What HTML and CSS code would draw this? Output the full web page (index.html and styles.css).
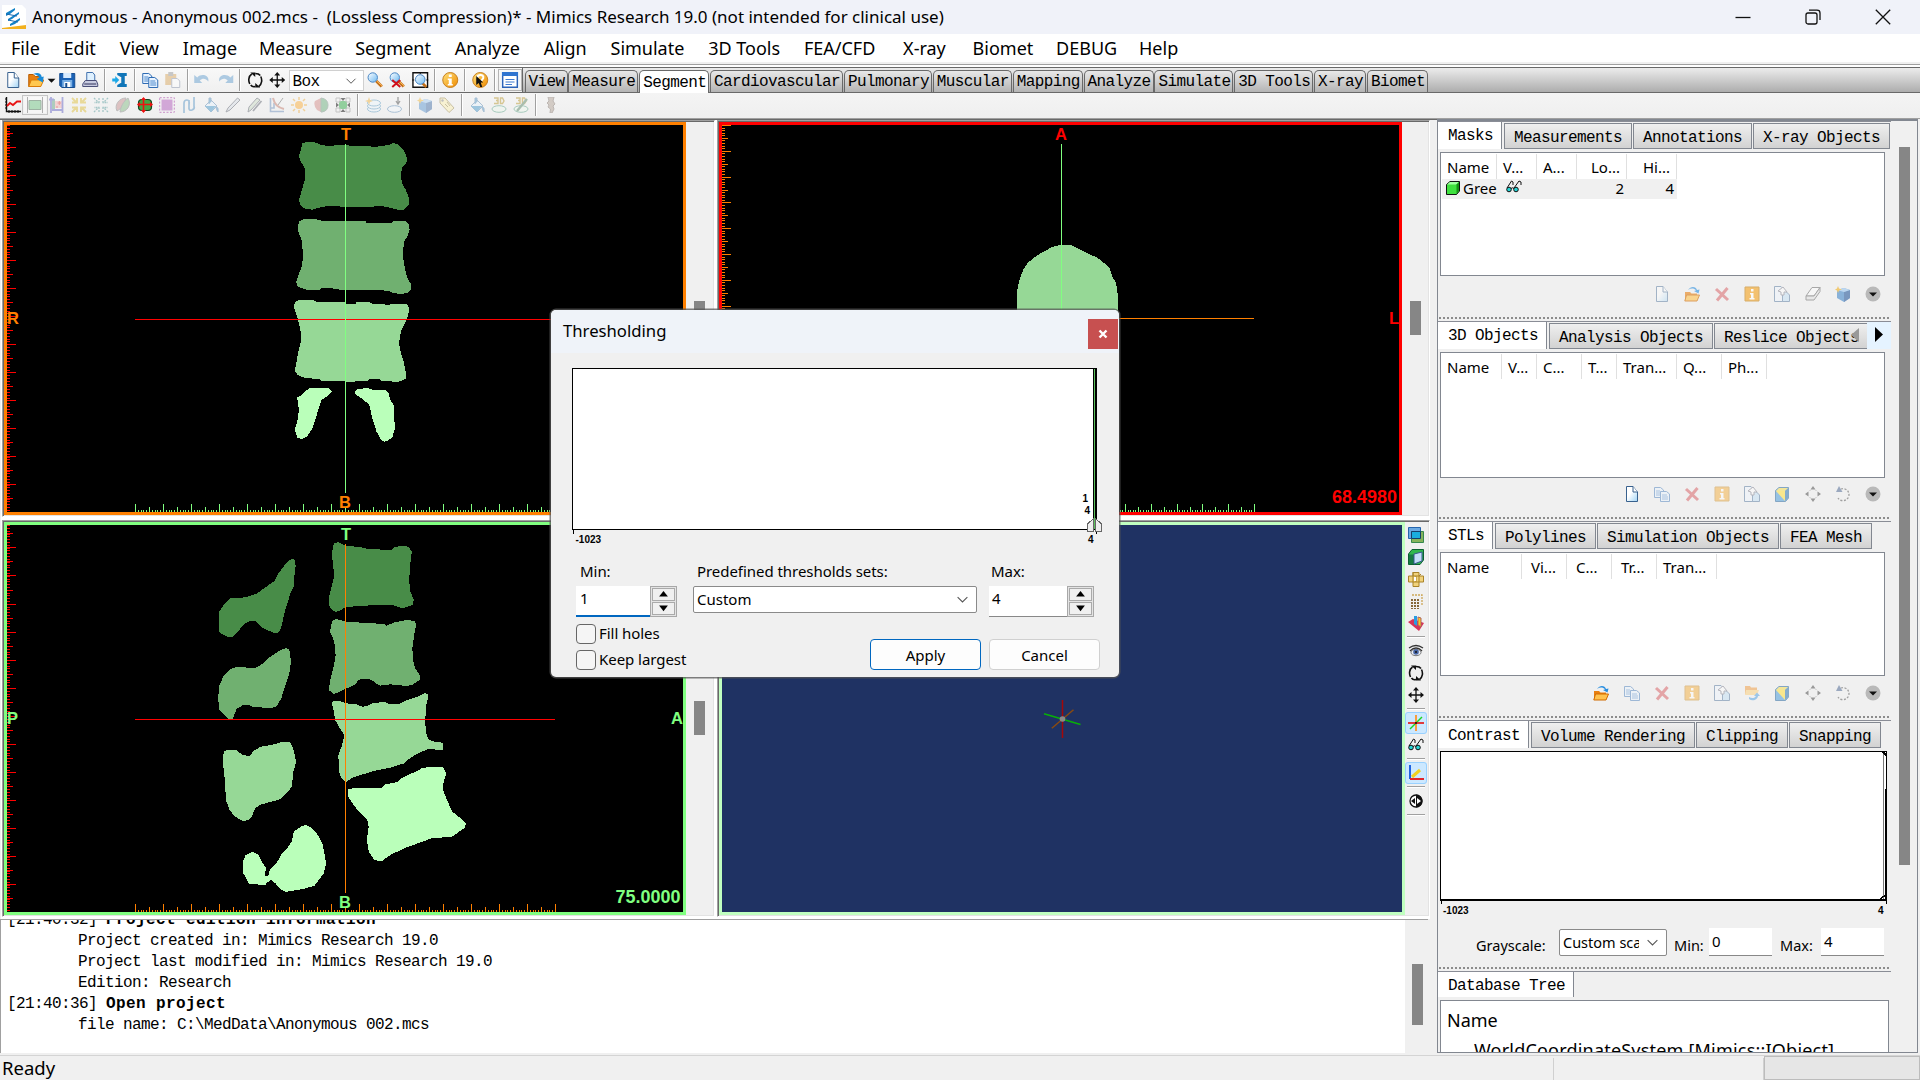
FILE: index.html
```html
<!DOCTYPE html>
<html lang="en">
<head>
<meta charset="utf-8">
<title>Mimics Research 19.0</title>
<link rel="stylesheet" href="styles.css">
</head>
<body>
<svg class="sprite" width="0" height="0">
  <defs>
    <linearGradient id="g-page" x1="0" y1="0" x2="1" y2="1"><stop offset=".4" stop-color="#fff"/><stop offset="1" stop-color="#9fd3f5"/></linearGradient>
    <linearGradient id="g-gold" x1="0" y1="0" x2="1" y2="1"><stop offset="0" stop-color="#ffe27a"/><stop offset="1" stop-color="#ef8a00"/></linearGradient>
    <linearGradient id="g-lens" x1="0" y1="0" x2="1" y2="1"><stop offset="0" stop-color="#fff"/><stop offset="1" stop-color="#6db9f2"/></linearGradient>
    <pattern id="dots-brown" width="3" height="3" patternUnits="userSpaceOnUse"><rect width="2" height="2" fill="#86683a"/></pattern>
  </defs>
  <symbol id="new" viewBox="0 0 16 16"><path d="M2.500.5H9L13.500 6V15.500H2.500Z" fill="url(#g-page)" stroke="#38618e"/><path d="M9 .5V6H13.500" fill="#fff" stroke="#38618e"/></symbol>
  <symbol id="open" viewBox="0 0 16 16"><path d="M.5 2.500H5L7 4.500H12V14.500H.5Z" fill="#e98010" stroke="#b85c00"/><path d="M3 8H15.500L12.500 14.500H.5Z" fill="#ffc850" stroke="#d97c08"/><path d="M5 2C9 0 13 1 13.500 5L15.500 4.500 14.500 10.500 8.500 7 11 5.500C10 3.500 8 2.500 5 2Z" fill="#1a8bd8"/></symbol>
  <symbol id="folder" viewBox="0 0 16 16"><path d="M1 6H6L7.500 7.500H13V15H1Z" fill="#e98010"/><path d="M2.500 9H15.500L13 15H.8Z" fill="#ffc24e" stroke="#d06a00"/><path d="M4 4C7-.5 12 .5 13 4L15.500 3.500 14.500 7.500 10 5 12 4.500C10 2 7 2 4 4Z" fill="#2a8fe0"/></symbol>
  <symbol id="caret" viewBox="0 0 16 16"><path d="M1 5H15L8 12Z" fill="#111"/></symbol>
  <symbol id="save" viewBox="0 0 16 16"><path d="M.5 1.500H15.500V15.500H2.500L.5 13.500Z" fill="#1b62b5" stroke="#174e91"/><path d="M4 1H12V6H4Z" fill="#d8ebff"/><path d="M3 8H13V15H3Z" fill="#7ab0e6"/><path d="M5 10H11V15H5Z" fill="#fff"/><path d="M6 11H8V15H6Z" fill="#174e91"/></symbol>
  <symbol id="print" viewBox="0 0 16 16"><path d="M4.500.5H10.500L12.500 3V9H4.500Z" fill="#dff1ff" stroke="#4272ae"/><path d="M.5 12L3 8.500H14L15.500 12V14.500H.5Z" fill="#c8cbe0" stroke="#4c5078"/><path d="M2 12H14" stroke="#30335a"/></symbol>
  <symbol id="mimics" viewBox="0 0 16 16"><path d="M5 1H14.500V4H12.500V12H14.500V15H5V13L8.500 11H9V5H8.500L5 3Z" fill="#1176b8"/><path d="M0 6.500H3V4L7 8 3 12V9.500H0Z" fill="#1ba8e8"/></symbol>
  <symbol id="copy" viewBox="0 0 16 16"><path d="M.5 1.500H6.500L9.500 4V11.500H.5Z" fill="#e8f3ff" stroke="#2f6cb4"/><path d="M6.500 5.500H12.500L15.500 8V15.500H6.500Z" fill="#e8f3ff" stroke="#2f6cb4"/><path d="M2 5H6M2 7H6M2 9H6M8 9H13M8 11H14M8 13H14" stroke="#4b88cc"/></symbol>
  <symbol id="paste" viewBox="0 0 16 16"><path d="M1 2H12V13H1Z" fill="#d49a45"/><path d="M4 0H9V4H4Z" fill="#888"/><path d="M7.500 6.500H13L15.500 9V15.500H7.500Z" fill="#fff" stroke="#7a86a0"/></symbol>
  <symbol id="undo" viewBox="0 0 16 16"><path d="M0 3V11H8L5.500 8.500C8 6 11.500 6 14 9.500 15.500 3 7 1 3 5.500Z" fill="#4b90c8"/></symbol>
  <symbol id="redo" viewBox="0 0 16 16"><path d="M16 3V11H8L10.500 8.500C8 6 4.500 6 2 9.500 .5 3 9 1 13 5.500Z" fill="#4b90c8"/></symbol>
  <symbol id="rotate" viewBox="0 0 16 16"><path d="M4.500 2C1 4.500 1 9 2.500 12M11.500 14.500C15 12 15 7.500 13.500 4.500M8 1.500C11 1.500 12 2 13 3.500M3.500 13C4.500 14.500 6 15 8 14.500" fill="none" stroke="#111" stroke-width="1.600"/><path d="M3 .5H8V5ZM13 15.500H8V11Z" fill="#111"/></symbol>
  <symbol id="move" viewBox="0 0 16 16"><path d="M8 2V14M2 8H14" stroke="#111" stroke-width="1.300"/><path d="M8 0L11 3.500H5ZM8 16L11 12.500H5ZM0 8L3.500 5V11ZM16 8L12.500 5V11Z" fill="#111"/></symbol>
  <symbol id="zoom" viewBox="0 0 16 16"><path d="M9 9L14.500 14.500" stroke="#c2701a" stroke-width="3"/><path d="M9.500 9L15 14" stroke="#ffb95a"/><circle cx="5.500" cy="5.500" r="4.700" fill="url(#g-lens)" stroke="#4a86c4"/></symbol>
  <symbol id="unzoom" viewBox="0 0 16 16"><use href="#zoom"/><path d="M3 8L11 15M11 8L3 15" stroke="#d1101c" stroke-width="2"/></symbol>
  <symbol id="zoomfit" viewBox="0 0 16 16"><path d="M.7.7H15.300V15.300H.7Z" fill="#fff" stroke="#111" stroke-width="1.400"/><path d="M10 11L14 15" stroke="#c2701a" stroke-width="2.500"/><circle cx="8" cy="7.500" r="4.800" fill="url(#g-lens)" stroke="#4a86c4"/><path d="M2 8H0M16 8H14M8 0V2" stroke="#111"/></symbol>
  <symbol id="info" viewBox="0 0 16 16"><circle cx="8" cy="8" r="7.500" fill="url(#g-gold)" stroke="#c78022"/><path d="M6.500 2.500H9.500V5H6.500ZM5.500 6.500H9.500V12H10.500V13.500H5.500V12H6.500V8H5.500Z" fill="#fff"/></symbol>
  <symbol id="help" viewBox="0 0 16 16"><circle cx="8" cy="8" r="7.500" fill="url(#g-gold)" stroke="#c78022"/><path d="M5 6C5 2 12 2 11 6L9 9" fill="none" stroke="#fff" stroke-width="2"/><path d="M4 4V13L6.500 11 8 15H10L8.500 10.500H11Z" fill="#111"/></symbol>
  <symbol id="panel" viewBox="0 0 16 16"><path d="M.7.7H15.300V15.300H.7Z" fill="#fff" stroke="#2b62b8" stroke-width="1.400"/><path d="M0 0H16V4H0Z" fill="#2f74d0"/><path d="M3.500 7.500H12.500M3.500 10H12.500M3.500 12.500H10" stroke="#3f7ad0"/></symbol>
  <symbol id="thresh" viewBox="0 0 16 16"><path d="M1.500 0V14.500H16" fill="none" stroke="#111" stroke-width="1.400"/><path d="M0 2H2M0 5H2M0 8H2M0 11H2M4 13V16M7 13V16M10 13V16M13 13V16" stroke="#111"/><path d="M2 9L5 6 8 8 12 4.500H16" fill="none" stroke="#e81414" stroke-width="1.800"/></symbol>
  <symbol id="crop" viewBox="0 0 16 16"><path d="M2 3.500H14V12.500H2Z" fill="#5cbd72" stroke="#2c5d3a"/><path d="M.5 0V16M15.500 0V16" stroke="#555"/></symbol>
  <symbol id="cropplus" viewBox="0 0 16 16"><path d="M3 2H6V12H3Z" fill="#4f9a78"/><path d="M6 4H13V11H6Z" fill="#f4a8a8"/><path d="M2 0V16M13.500 0V16M0 2.500H5M3 13H13" stroke="#4e4ec0" stroke-width="1.800"/><path d="M8.500 6H12M10.300 4V8M7 10H9" stroke="#d22"/></symbol>
  <symbol id="flower" viewBox="0 0 16 16"><path d="M1 1L6 6M15 1L10 6M1 15L6 10M15 15L10 10M6 1V5.500H1M10 1V5.500H15M6 15V10.500H1M10 15V10.500H15" fill="none" stroke="#dcb820" stroke-width="1.900"/></symbol>
  <symbol id="flower2" viewBox="0 0 16 16"><path d="M1 1L6 6M15 1L10 6M1 15L6 10M15 15L10 10M6 1V5.500H1M10 1V5.500H15M6 15V10.500H1M10 15V10.500H15" fill="none" stroke="#3f8f90" stroke-width="1.300" stroke-dasharray="2 1"/></symbol>
  <symbol id="leaf" viewBox="0 0 16 16"><path d="M2 14C-1 8 4 1 11 1 9 8 7 11 2 14Z" fill="#c08080" stroke="#777"/><path d="M13 1C17 8 12 15 5 15 6 9 8 5 13 1Z" fill="#74b274" stroke="#777"/></symbol>
  <symbol id="region" viewBox="0 0 16 16"><rect x="1.500" y="2.500" width="13" height="11" rx="3.500" fill="#45a545" stroke="#142" stroke-width="1.200"/><path d="M6.500 1V15M2 7.500H14" stroke="#e11" stroke-width="1.600"/><path d="M6.500 0L9 3H4ZM6.500 16L9 13H4ZM0 7.500L3 5V10ZM16 7.500L13 5V10Z" fill="#e11"/></symbol>
  <symbol id="select" viewBox="0 0 16 16"><path d="M.7.7H15.300V15.300H.7Z" fill="none" stroke="#b050b0" stroke-dasharray="2 1.500"/><path d="M2.500 2.500H13.500V13.500H2.500Z" fill="#bd76c6"/></symbol>
  <symbol id="split" viewBox="0 0 16 16"><path d="M3 16V6Q3 3 6 3T8 8V11Q8 14 11 13T13 9V0M8 3V12" fill="none" stroke="#4087bf" stroke-width="1.700"/></symbol>
  <symbol id="bucket" viewBox="0 0 16 16"><path d="M2 9L8 3 14 9 8 15Z" fill="#e6f2ff" stroke="#4a7fae"/><path d="M2 9H13L8 15Z" fill="#2d8cc6"/><path d="M6 7V1H8V5M13 9Q16 11 15 15 13 13 13 9Z" stroke="#4a7fae" fill="#2d8cc6"/></symbol>
  <symbol id="pencil" viewBox="0 0 16 16"><path d="M1 15L3 11 12.500 1 15 3 5 13Z" fill="#d4dbe4" stroke="#4d5360"/></symbol>
  <symbol id="pencils" viewBox="0 0 16 16"><path d="M1 15L2 10 10 1 13 3 4 13Z" fill="#c5d8c0" stroke="#4d5360"/><path d="M6 14L14.500 4" stroke="#4d5360" stroke-width="1.600"/></symbol>
  <symbol id="profile" viewBox="0 0 16 16"><path d="M1.500 1V14.500H15M1 11H5V6" fill="none" stroke="#5b82b5" stroke-width="1.600"/><path d="M4 1Q6 10 15 12" fill="none" stroke="#bf6d5b" stroke-width="2"/><path d="M9 8L14 1" stroke="#555"/></symbol>
  <symbol id="sun" viewBox="0 0 16 16"><circle cx="8" cy="8" r="4" fill="#ffa51d"/><path d="M8 0V3M8 13V16M0 8H3M13 8H16M2 2L4 4M14 2L12 4M2 14L4 12M14 14L12 12" stroke="#f0a423" stroke-width="1.500"/></symbol>
  <symbol id="head" viewBox="0 0 16 16"><path d="M8 1V15L4 13Q0 8 2 4Z" fill="#d07c78"/><path d="M8 1Q15 2 15 8T9 15H8Z" fill="#56a66b" stroke="#687"/></symbol>
  <symbol id="arrows4" viewBox="0 0 16 16"><rect x="4" y="4" width="8" height="8" fill="#53b866"/><path d="M1 1H5V5H1ZM11 1H15V5H11ZM1 11H5V15H1ZM11 11H15V15H11Z" fill="none" stroke="#aaa"/><path d="M8 4L5.500 1H10.500ZM8 12L5.500 15H10.500ZM4 8L1 5.500V10.500ZM12 8L15 5.500V10.500Z" fill="#333"/></symbol>
  <symbol id="rings" viewBox="0 0 16 16"><g fill="#edf7ff" stroke="#4b91bc"><ellipse cx="9" cy="12" rx="6.500" ry="3"/><ellipse cx="9" cy="9" rx="6.500" ry="3"/><ellipse cx="9" cy="6" rx="6.500" ry="3"/></g><path d="M4 0L5 3 8 4 5 5 4 8 3 5 0 4 3 3Z" fill="#f0a720"/></symbol>
  <symbol id="ringdown" viewBox="0 0 16 16"><ellipse cx="7.500" cy="12" rx="7" ry="3.300" fill="#f5faff" stroke="#4b80b0"/><path d="M11 0V7M9 4L11 7 13 4" fill="none" stroke="#333" stroke-width="1.300"/></symbol>
  <symbol id="cubeblue" viewBox="0 0 16 16"><path d="M2 4L9 2 15 4V12L9 16 2 12Z" fill="#4689cb"/><path d="M9 6L15 4V12L9 16Z" fill="#2b5d9e"/><path d="M2 4L9 2 15 4 9 6Z" fill="#9cc8f0"/><path d="M3 0L4 2.500 7 3.500 4 4.500 3 7 2 4.500 0 3.500 2 2.500Z" fill="#f2b01e"/></symbol>
  <symbol id="tag" viewBox="0 0 16 16"><path d="M1 1H6L15 11 10 15.500 1 6Z" fill="#fff0a8" stroke="#937f3a"/><circle cx="3.500" cy="3.500" r="1.200" fill="#777"/><path d="M6 7L9 10M8 5L11 9" stroke="#937f3a"/></symbol>
  <symbol id="pen3d" viewBox="0 0 16 16"><path d="M3 1H7V3.500H5H7V6.500H3M9.500 1V6.500H11.500L13 4 11.500 1Z" fill="none" stroke="#b08a10" stroke-width="1.400"/><ellipse cx="8" cy="12" rx="7" ry="3.300" fill="#eefaee" stroke="#45987a"/></symbol>
  <symbol id="ring3d" viewBox="0 0 16 16"><use href="#pen3d"/><path d="M4 14L14 2" stroke="#447755" stroke-width="2.400"/></symbol>
  <symbol id="knee" viewBox="0 0 16 16"><path d="M5 0H11L10 4 12 7 10 9 11 12 9 16H7L7.500 12 5 10 6 8 4 6 6 4Z" fill="#a89688" stroke="#75675e"/></symbol>
  <symbol id="del" viewBox="0 0 16 16"><path d="M2 3L14 14M13.500 2L3 14.500" stroke="#d33c42" stroke-width="3"/></symbol>
  <symbol id="prop" viewBox="0 0 16 16"><path d="M1 1H15V15H1Z" fill="#f6a21c" stroke="#c98310"/><path d="M7 3H9.500V5.500H7ZM6 7H9.500V12H10.500V13.500H5.500V12H7V8.500H6Z" fill="#fff"/></symbol>
  <symbol id="dup" viewBox="0 0 16 16"><path d="M.5.5H7L11.500 5V15.500H.5Z" fill="#eef6ff" stroke="#38618e"/><path d="M8.500 5.500H12L15.500 9V15.500H8.500Z" fill="#b8dcf6" stroke="#38618e"/><path d="M4 5L9 1 13 6H10V9H7V6Z" fill="#fff" stroke="#667"/></symbol>
  <symbol id="eraser" viewBox="0 0 16 16"><path d="M1 10L7 1.500H15L9 10Z" fill="#fff" stroke="#444"/><path d="M1 10H9L15 1.500V5.500L9 14H1Z" fill="#ddd" stroke="#444"/></symbol>
  <symbol id="more" viewBox="0 0 16 16"><circle cx="8" cy="8" r="7.500" fill="#b9b9b9"/><path d="M4 6.500H12L8 10.500Z" fill="#111"/></symbol>
  <symbol id="cube2" viewBox="0 0 16 16"><path d="M1.500 4.500L5 1.500H14.500V12L11.500 15.500H1.500Z" fill="#5ca5dc" stroke="#3e76a8"/><path d="M5 2H14L11 5H2Z" fill="#f5e060"/><path d="M2 5H11V15Z" fill="#ffe24a"/><path d="M11 5L14.500 2V12L11 15Z" fill="#3f81b9"/></symbol>
  <symbol id="expand" viewBox="0 0 16 16"><path d="M8 0L10.500 3.500H5.500ZM8 16L10.500 12.500H5.500ZM0 8L3.500 5.500V10.500ZM16 8L12.500 5.500V10.500Z" fill="#222"/><path d="M5 4.500L4.500 5M11 4.500L11.500 5M5 11.500L4.500 11M11 11.500L11.500 11" stroke="#222"/></symbol>
  <symbol id="spin" viewBox="0 0 16 16"><path d="M6 3A6 6 0 1 1 3 12" fill="none" stroke="#333" stroke-width="1.300" stroke-dasharray="2 1.500"/><path d="M4 0L7.500 6H1Z" fill="#25477e"/></symbol>
  <symbol id="sync" viewBox="0 0 16 16"><path d="M1 1H6L7 2.500H13V9H1Z" fill="#f08a18"/><path d="M2 5H15L13 10H1Z" fill="#ffc860"/><path d="M5 14C9 17 14 14 14 11L16 11 13 7.500 10 11H12C11 13 8 14 5 12Z" fill="#2a8fe0"/></symbol>
  <symbol id="layers" viewBox="0 0 16 16"><path d="M.5.5H12.500V11.500H.5Z" fill="#6ba9e2" stroke="#2565ad"/><path d="M3.500 4.500H15.500V15.500H3.500Z" fill="#86b35c" stroke="#36884e"/><path d="M3.500 4.500H12.500V11.500H3.500Z" fill="#1aaede" stroke="#173f6b"/></symbol>
  <symbol id="box3d" viewBox="0 0 16 16"><path d="M.5 5L4 .5H15.500V11L12 15.500H.5Z" fill="#2fb64d" stroke="#0c6132"/><path d="M1 5.500H6V15H1Z" fill="#157a42"/><path d="M6 5L14 3V12L6 15Z" fill="#c3dcf8" stroke="#35588c"/></symbol>
  <symbol id="voxel" viewBox="0 0 16 16"><path d="M5 1.500H11V5H15.500V11H11V15.500H5V11H.5V5H5Z" fill="#f1d27b" stroke="#a98328"/><path d="M5 5H11V11H5ZM5 5V1M11 5L13 3M8 5V11" fill="none" stroke="#a98328"/><path d="M6 6H8V10H6Z" fill="#fff"/></symbol>
  <symbol id="points" viewBox="0 0 16 16"><rect x="2" y="5" width="10" height="11" fill="url(#dots-brown)"/><path d="M4 2H14V13" fill="none" stroke="#cca657" stroke-width="1.300" stroke-dasharray="2 1"/></symbol>
  <symbol id="clip3d" viewBox="0 0 16 16"><path d="M0 7L5 4 16 8 11 16Z" fill="#d73358"/><path d="M6 1H9V11L6 9Z" fill="#2a9ce0"/><path d="M10 2L13 3V12L10 10Z" fill="#ffc81e" stroke="#a66"/></symbol>
  <symbol id="eye" viewBox="0 0 16 16"><path d="M1 5Q8 0 15 5M2 8Q8 2 14 8" fill="none" stroke="#333" stroke-width="1.300"/><ellipse cx="8" cy="9.500" rx="5" ry="3.200" fill="#e8edf5" stroke="#777"/><circle cx="8" cy="9" r="2.800" fill="#4765a5"/><circle cx="8" cy="9" r="1" fill="#111"/></symbol>
  <symbol id="cross3" viewBox="0 0 16 16"><path d="M8 0V16" stroke="#ff8d1c" stroke-width="1.700"/><path d="M2 14L14 2" stroke="#1dd321" stroke-width="1.500"/><path d="M0 8H16" stroke="#e31b1b" stroke-width="1.700"/><circle cx="8" cy="8" r="1" fill="#111"/></symbol>
  <symbol id="glasses" viewBox="0 0 16 16"><circle cx="3" cy="10.500" r="2.300" fill="#25d2d2" stroke="#111"/><circle cx="10" cy="10.500" r="2.300" fill="#25d2d2" stroke="#111"/><path d="M1 9L5.500 2 7 3V6M8 9L13 2 15 3V6M5 9.500Q6.500 8 8 9.500" fill="none" stroke="#111"/></symbol>
  <symbol id="axes" viewBox="0 0 16 16"><path d="M2 0V14" stroke="#1e63e0" stroke-width="2"/><path d="M2 14H16" stroke="#e0262c" stroke-width="2"/><path d="M4 12L12 5" stroke="#f0d020" stroke-width="3"/></symbol>
  <symbol id="contrast" viewBox="0 0 16 16"><circle cx="8" cy="8" r="6" fill="#fff" stroke="#111" stroke-width="1.300"/><path d="M8 1.500A6.500 6.500 0 0 1 8 14.500Z" fill="#111"/><path d="M3 8L7 5V11Z" fill="#111"/><path d="M13 8L9 5V11Z" fill="#fff"/></symbol>
  <symbol id="greencube" viewBox="0 0 16 16"><path d="M1.500 4.500L5 1.500H14.500V11L11.500 14.500H1.500Z" fill="#3fe03f" stroke="#111"/><path d="M2 4.500L5 2H14L11.500 4.500Z" fill="#a2ffa2"/><path d="M11.500 4.500L14 2V11L11.500 14Z" fill="#159315"/></symbol>
  <symbol id="chev" viewBox="0 0 16 16"><path d="M2 5L8 11 14 5" fill="none" stroke="#555" stroke-width="1.300"/></symbol>
  <symbol id="up" viewBox="0 0 16 16"><path d="M8 3L15 12H1Z" fill="#000"/></symbol>
  <symbol id="down" viewBox="0 0 16 16"><path d="M8 13L15 4H1Z" fill="#000"/></symbol>
</svg>

<header class="titlebar">
  <svg class="logo" viewBox="0 0 24 24"><path d="M0 0H20L24 4V24H0Z" fill="#fff"/><path d="M0 23L24 20V24H0Z" fill="#f2b01e"/><path d="M4 8L13 3V5L8 9 4 11ZM6 14L17 7V9L10 14 6 16ZM8 19L18 13V15L13 19 8 21Z" fill="#1483c8"/><path d="M4 9L15 11M6 15L16 17" stroke="#1769b0"/></svg>
  <h1>Anonymous - Anonymous 002.mcs -&nbsp; (Lossless Compression)* - Mimics Research 19.0 (not intended for clinical use)</h1>
  <div class="winbtns">
    <svg viewBox="0 0 16 16"><path d="M.5 8.500H15.500"/></svg>
    <svg viewBox="0 0 16 16"><rect x="1" y="4" width="11" height="11" rx="2"/><path d="M4 1.200H12Q15 1.200 15 4V11"/></svg>
    <svg viewBox="0 0 16 16"><path d="M.8.8L15.200 15.200M15.200.8L.8 15.200"/></svg>
  </div>
</header>
<nav class="menubar"><span>File</span><span>Edit</span><span>View</span><span>Image</span><span>Measure</span><span>Segment</span><span>Analyze</span><span>Align</span><span>Simulate</span><span>3D Tools</span><span>FEA/CFD</span><span>X-ray</span><span>Biomet</span><span>DEBUG</span><span>Help</span></nav>

<div class="toolrow main-tools">
  <svg class="b"><use href="#new"/></svg><svg class="b"><use href="#open"/></svg><svg class="b caret"><use href="#caret"/></svg><svg class="b"><use href="#save"/></svg><svg class="b"><use href="#print"/></svg><i></i>
  <svg class="b"><use href="#mimics"/></svg><i></i>
  <svg class="b"><use href="#copy"/></svg><svg class="b off"><use href="#paste"/></svg><i></i>
  <svg class="b off"><use href="#undo"/></svg><svg class="b off"><use href="#redo"/></svg><i></i>
  <svg class="b"><use href="#rotate"/></svg><svg class="b"><use href="#move"/></svg>
  <div class="boxsel"><span>Box</span><svg><use href="#chev"/></svg></div>
  <svg class="b"><use href="#zoom"/></svg><svg class="b"><use href="#unzoom"/></svg><svg class="b"><use href="#zoomfit"/></svg><i></i>
  <svg class="b"><use href="#info"/></svg><i></i><svg class="b"><use href="#help"/></svg><i></i><svg class="b on"><use href="#panel"/></svg>
  <div class="ribbon"><span>View</span><span>Measure</span><span class="sel">Segment</span><span>Cardiovascular</span><span>Pulmonary</span><span>Muscular</span><span>Mapping</span><span>Analyze</span><span>Simulate</span><span>3D Tools</span><span>X-ray</span><span>Biomet</span></div>
</div>
<div class="toolrow seg-tools">
  <svg class="b"><use href="#thresh"/></svg><svg class="b off framed"><use href="#crop"/></svg><svg class="b off"><use href="#cropplus"/></svg><svg class="b off"><use href="#flower"/></svg><svg class="b off"><use href="#flower2"/></svg><svg class="b off"><use href="#leaf"/></svg><svg class="b"><use href="#region"/></svg><svg class="b mid"><use href="#select"/></svg><svg class="b off"><use href="#split"/></svg><svg class="b off"><use href="#bucket"/></svg><svg class="b off"><use href="#pencil"/></svg><svg class="b off"><use href="#pencils"/></svg><svg class="b off"><use href="#profile"/></svg><svg class="b off"><use href="#sun"/></svg><svg class="b off"><use href="#head"/></svg><svg class="b mid"><use href="#arrows4"/></svg><i></i>
  <svg class="b off"><use href="#rings"/></svg><svg class="b off"><use href="#ringdown"/></svg><i></i>
  <svg class="b off"><use href="#cubeblue"/></svg><svg class="b off"><use href="#tag"/></svg><i></i>
  <svg class="b off"><use href="#bucket"/></svg><svg class="b off"><use href="#pen3d"/></svg><svg class="b off"><use href="#ring3d"/></svg><i></i>
  <svg class="b off"><use href="#knee"/></svg>
</div>

<main class="workspace">
  <div class="left">
    <div class="views">
      <section class="pane">
        <svg class="view coronal" viewBox="0 0 676 387">
          <g transform="translate(-7 -10) scale(.45918 .33333)">
            <polygon class="m1" points="659,84 672,81 686,82 698,89 718,94 735,90 752,89 766,93 800,93 815,96 832,93 848,89 855,84 866,88 874,97 881,110 886,128 885,146 875,158 873,190 877,208 884,225 891,250 891,268 880,284 866,284 848,278 828,272 812,275 752,276 722,272 700,276 680,284 664,281 655,273 651,256 656,232 661,208 665,190 664,160 655,140 651,125 655,105"/>
            <polygon class="m2" points="652,318 664,312 690,313 700,317 796,318 797,324 852,324 856,318 884,318 891,328 892,345 888,362 880,380 877,420 881,455 887,488 894,505 895,525 888,534 872,537 856,534 846,528 828,525 745,525 718,519 700,520 696,524 668,524 648,515 645,500 650,480 656,460 660,430 658,380 650,350 649,330"/>
            <polygon class="m3" points="643,560 655,554 684,556 690,561 752,562 754,567 774,567 776,562 805,562 810,566 835,567 840,570 852,568 886,567 891,580 889,600 882,625 873,650 869,685 873,715 879,740 883,765 884,790 876,797 864,801 850,799 830,797 826,793 804,793 800,797 778,798 770,801 752,801 748,797 700,797 696,792 664,789 648,780 642,768 645,745 650,710 656,675 655,650 648,610 640,575"/>
            <polygon class="m4" points="676,819 716,819 723,829 714,843 700,855 694,880 688,910 680,942 668,966 656,972 648,968 642,945 648,915 651,885 647,848 658,840 664,828"/>
            <polygon class="m4" points="774,828 780,822 800,819 812,824 840,825 846,835 850,855 857,870 860,940 855,965 846,976 838,980 830,975 820,950 812,915 804,870 790,852 774,838"/>
          </g>
          <path d="M128 194.500H548" stroke="red"/><path d="M338.500 19V368" stroke="#80ff80"/>
          <g stroke="red"><path d="M1.500 -3V387" stroke-width="3" stroke-dasharray="1 1.808" stroke-dashoffset="-.4"/><path d="M3 -5.700V387" stroke-width="6" stroke-dasharray="1 13.040"/><path d="M4.500 -5.700V387" stroke-width="9" stroke-dasharray="1 27.080"/></g>
          <g stroke="#80ff80"><path d="M128 386H548" stroke-width="2" stroke-dasharray="1 1.800"/><path d="M128 384.500H548" stroke-width="5" stroke-dasharray="1 13"/><path d="M128 383H549" stroke-width="8" stroke-dasharray="1 27"/></g>
          <g fill="#ff8000"><text x="339" y="15" text-anchor="middle">T</text><text x="338" y="383" text-anchor="middle">B</text><text x="0" y="199">R</text></g>
        </svg>
        <div class="vscroll"><b></b></div>
      </section>
      <section class="pane">
        <svg class="view axial" viewBox="0 0 677 387">
          <g transform="translate(-32 -15) scale(.47194 .33333)"><polygon class="m3" points="693,600 693,545 698,510 706,480 716,458 732,440 750,424 768,411 785,405 806,405 822,415 842,430 862,442 878,460 889,475 895,500 903,520 907,560 907,700 693,700"/></g>
          <path d="M339.500 19V368" stroke="#80ff80"/><path d="M146 193.500H532" stroke="#ff8000"/>
          <g stroke="#ff8000"><path d="M1.500 0V387" stroke-width="3" stroke-dasharray="1 1.580"/><path d="M3 0V387" stroke-width="6" stroke-dasharray="1 11.900"/><path d="M4.500 0V387" stroke-width="9" stroke-dasharray="1 24.800"/></g>
          <g stroke="#80ff80"><path d="M145 386H533" stroke-width="2" stroke-dasharray="1 1.580"/><path d="M145 384.500H533" stroke-width="5" stroke-dasharray="1 11.900"/><path d="M145 383H533" stroke-width="8" stroke-dasharray="1 24.800"/></g>
          <g fill="red"><text x="339" y="15" text-anchor="middle">A</text><text x="667" y="199">L</text><text class="num" x="675" y="378" text-anchor="end">68.4980</text></g>
        </svg>
        <div class="vscroll"><b></b></div>
      </section>
      <section class="pane">
        <svg class="view sagittal" viewBox="0 0 676 387">
          <g transform="translate(-7 -10) scale(.45918 .33333)">
            <polygon class="m1" points="634,132 641,132 644,152 641,185 640,215 632,235 627,262 620,290 614,330 608,352 598,354 580,344 568,335 558,320 548,317 536,323 524,340 514,355 506,365 494,365 478,352 477,290 490,265 502,250 535,247 560,235 580,215 598,198 605,178 620,150"/>
            <polygon class="m1" points="727,84 737,82 752,92 788,97 800,102 852,105 860,96 872,93 890,95 897,110 893,150 891,200 894,230 901,255 899,270 886,276 878,280 868,276 855,270 820,270 785,273 752,276 742,286 730,291 718,278 716,250 722,215 727,190 726,150 722,120"/>
            <polygon class="m2" points="612,404 624,399 630,405 634,440 630,475 622,510 612,552 602,574 592,579 550,576 545,571 528,571 515,582 507,612 498,612 490,600 478,585 475,550 478,510 488,480 502,462 516,456 556,459 570,448 582,432"/>
            <polygon class="m2" points="725,316 733,312 752,320 800,324 836,327 842,332 860,322 885,315 904,318 906,330 902,360 898,400 900,440 905,462 915,482 914,495 900,508 886,513 850,508 828,512 818,504 808,494 796,491 782,494 772,510 752,522 740,530 727,537 716,525 720,490 726,460 731,420 728,380 719,350 721,330"/>
            <polygon class="m3" points="487,708 500,704 516,706 528,720 544,723 552,708 568,695 590,690 612,682 632,682 638,700 641,715 645,740 638,775 636,815 622,838 610,853 570,868 556,878 550,900 542,916 528,917 512,905 500,885 492,855 490,800 486,750"/>
            <polygon class="m3" points="722,560 740,558 755,565 776,568 790,576 800,572 814,563 840,562 848,567 870,567 884,556 902,549 918,540 925,534 932,538 932,550 928,570 926,620 928,655 934,674 946,680 964,683 964,704 930,703 910,716 894,728 880,745 850,758 820,766 790,778 768,788 752,802 744,790 738,770 737,720 745,690 750,660 738,635 730,615 727,590"/>
            <polygon class="m4" points="757,824 770,819 830,819 840,808 866,801 876,788 905,770 920,759 935,756 965,757 972,775 966,800 965,825 975,860 985,890 1005,912 1015,925 1012,938 985,965 940,970 910,985 880,1000 850,1020 830,1040 815,1034 803,1010 799,975 803,935 800,915 785,895 770,870 758,845"/>
            <polygon class="m4" points="640,950 655,935 665,930 676,936 690,955 702,985 706,1010 710,1045 705,1075 685,1112 660,1122 622,1131 610,1122 600,1105 590,1095 582,1103 578,1109 542,1108 538,1095 530,1075 529,1040 535,1020 550,1011 563,1020 570,1040 579,1058 577,1082 584,1082 588,1065 602,1045 612,1020 625,1000 635,980"/>
          </g>
          <path d="M128 194.500H548" stroke="red"/><path d="M338.500 19V368" stroke="#ff8000"/>
          <g stroke="red"><path d="M1.500 -3V387" stroke-width="3" stroke-dasharray="1 1.808" stroke-dashoffset="-.4"/><path d="M3 -5.700V387" stroke-width="6" stroke-dasharray="1 13.040"/><path d="M4.500 -5.700V387" stroke-width="9" stroke-dasharray="1 27.080"/></g>
          <g stroke="#ff8000"><path d="M128 386H548" stroke-width="2" stroke-dasharray="1 1.800"/><path d="M128 384.500H548" stroke-width="5" stroke-dasharray="1 13"/><path d="M128 383H549" stroke-width="8" stroke-dasharray="1 27"/></g>
          <g fill="#80ff80"><text x="339" y="15" text-anchor="middle">T</text><text x="338" y="383" text-anchor="middle">B</text><text x="0" y="199">P</text><text x="676" y="199" text-anchor="end">A</text><text class="num" x="673.500" y="378" text-anchor="end">75.0000</text></g>
        </svg>
        <div class="vscroll"><b></b></div>
      </section>
      <section class="pane">
        <svg class="view scene" viewBox="0 0 680 387">
          <g fill="none" stroke-width="1.500"><path d="M340.500 175V213" stroke="#a40808"/><path d="M322 188.700L358.500 199.500" stroke="#08b008"/><path d="M329.800 203.300L351.500 184.700" stroke="#8a4a10"/></g><circle cx="340.500" cy="194" r="2.800" fill="#8a8a8a"/>
        </svg>
        <div class="tools3d">
          <svg class="b"><use href="#layers"/></svg><svg class="b"><use href="#box3d"/></svg><svg class="b"><use href="#voxel"/></svg><svg class="b"><use href="#points"/></svg><svg class="b"><use href="#clip3d"/></svg><i></i>
          <svg class="b"><use href="#eye"/></svg><svg class="b"><use href="#rotate"/></svg><svg class="b"><use href="#move"/></svg><i></i>
          <svg class="b lit"><use href="#cross3"/></svg><svg class="b"><use href="#glasses"/></svg><i></i>
          <svg class="b lit"><use href="#axes"/></svg><i></i><svg class="b"><use href="#contrast"/></svg><i></i>
        </div>
      </section>
    </div>
    <div class="log">
      <div class="lines">
        <p>[21:40:32] <b>Project edition information</b></p>
        <p class="in">Project created in: Mimics Research 19.0</p>
        <p class="in">Project last modified in: Mimics Research 19.0</p>
        <p class="in">Edition: Research</p>
        <p>[21:40:36] <b>Open project</b></p>
        <p class="in">file name: C:\MedData\Anonymous 002.mcs</p>
      </div>
      <div class="vscroll"><b></b></div>
    </div>
  </div>

  <aside class="side">
    <div class="sections">
      <section class="sec s1">
        <div class="tabs"><span class="sel">Masks</span><span>Measurements</span><span>Annotations</span><span>X-ray Objects</span></div>
        <div class="list">
          <div class="row head c1"><span>Name</span><span>V...</span><span>A...</span><span class="r">Lo...</span><span class="r">Hi...</span></div>
          <div class="row item c1"><span><svg><use href="#greencube"/></svg>Gree</span><span><svg><use href="#glasses"/></svg></span><span></span><span class="r">2</span><span class="r">4</span></div>
        </div>
        <div class="acts"><svg class="off"><use href="#new"/></svg><svg class="mid"><use href="#folder"/></svg><svg class="off"><use href="#del"/></svg><svg class="mid"><use href="#prop"/></svg><svg class="off"><use href="#dup"/></svg><svg class="off"><use href="#eraser"/></svg><svg class="mid"><use href="#cubeblue"/></svg><svg><use href="#more"/></svg></div>
      </section>
      <section class="sec s2">
        <div class="tabs"><span class="sel">3D Objects</span><span>Analysis Objects</span><span class="cut">Reslice Objects</span>
          <div class="pager"><svg viewBox="0 0 15 27"><path d="M7 6V20L-1 13Z" fill="#999"/></svg><svg class="fwd" viewBox="0 0 24 27"><path d="M8 5V20L16 12.500Z" fill="#000"/></svg></div>
        </div>
        <div class="list"><div class="row head c2"><span>Name</span><span>V...</span><span>C...</span><span>T...</span><span>Tran...</span><span>Q...</span><span>Ph...</span></div></div>
        <div class="acts"><svg><use href="#new"/></svg><svg class="off"><use href="#copy"/></svg><svg class="off"><use href="#del"/></svg><svg class="off"><use href="#prop"/></svg><svg class="off"><use href="#dup"/></svg><svg class="mid"><use href="#cube2"/></svg><svg class="off"><use href="#expand"/></svg><svg class="off"><use href="#spin"/></svg><svg><use href="#more"/></svg></div>
      </section>
      <section class="sec s3">
        <div class="tabs"><span class="sel">STLs</span><span>Polylines</span><span>Simulation Objects</span><span>FEA Mesh</span></div>
        <div class="list"><div class="row head c3"><span>Name</span><span>Vi...</span><span>C...</span><span>Tr...</span><span>Tran...</span></div></div>
        <div class="acts"><svg><use href="#folder"/></svg><svg class="off"><use href="#copy"/></svg><svg class="off"><use href="#del"/></svg><svg class="off"><use href="#prop"/></svg><svg class="off"><use href="#dup"/></svg><svg class="off"><use href="#sync"/></svg><svg class="mid"><use href="#cube2"/></svg><svg class="off"><use href="#expand"/></svg><svg class="off"><use href="#spin"/></svg><svg><use href="#more"/></svg></div>
      </section>
      <section class="sec s4">
        <div class="tabs"><span class="sel">Contrast</span><span>Volume Rendering</span><span>Clipping</span><span>Snapping</span></div>
        <svg class="hist" viewBox="0 0 450 166">
          <path d="M.5.5H446.500V148.500H.5Z" fill="#fff" stroke="#000"/><path d="M0 149H447" stroke="#000" stroke-width="2"/><path d="M1.500 149V153M446.500 149V153" stroke="#000"/>
          <path d="M443.500 3V148" stroke="#777"/><path d="M445.500 38V148" stroke="#000" stroke-width="2"/><path d="M443 1L447 5M440 149Q443 144 447 145" stroke="#000" stroke-width="1.500" fill="none"/>
          <text x="3" y="163">-1023</text><text x="438" y="163">4</text>
        </svg>
        <div class="gray"><label>Grayscale:</label><div class="combo"><span>Custom sca</span><svg><use href="#chev"/></svg></div><label class="mn">Min:</label><div class="inp">0</div><label class="mx">Max:</label><div class="inp">4</div></div>
      </section>
      <section class="sec s5">
        <div class="tabs"><span class="sel">Database Tree</span></div>
        <div class="list tree"><p>Name</p><p class="child">WorldCoordinateSystem [Mimics::IObject]</p></div>
      </section>
    </div>
    <div class="sidebar-scroll"><b></b></div>
  </aside>
</main>
<footer class="status"><span>Ready</span><i></i><i class="second"></i><div class="grip"></div></footer>

<div class="dialog">
  <div class="dtitle"><span>Thresholding</span><button><svg viewBox="0 0 10 10"><path d="M1.500 1.500L8.500 8.500M8.500 1.500L1.500 8.500" stroke="#fff" stroke-width="2.400"/></svg></button></div>
  <svg class="dhist" viewBox="0 0 535 180">
    <path d="M.5.5H524.500V161.500H.5Z" fill="#fff" stroke="#000"/><path d="M521.500 0V162" stroke="#000"/><path d="M524 0V162" stroke="#000" stroke-width="2"/><path d="M522.500 1V161" stroke="#5cc05c"/>
    <path d="M1.500 162V166M524.500 162V166" stroke="#000"/>
    <path d="M521.500 150.500L515.500 156V163.500H521.500Z" fill="#eee" stroke="#666"/><path d="M523.500 150.500L529.500 156V163.500H523.500Z" fill="#eee" stroke="#666"/><path d="M522.500 150V161" stroke="#5cc05c"/>
    <text x="3.500" y="175">-1023</text><text x="516" y="175">4</text><text x="510.500" y="134">1</text><text x="512.500" y="146">4</text>
  </svg>
  <div class="fields">
    <div class="f f1"><label>Min:</label><div class="num-in act"><span>1</span><div class="spin"><svg><use href="#up"/></svg><svg><use href="#down"/></svg></div></div></div>
    <div class="f f2"><label>Predefined thresholds sets:</label><div class="combo"><span>Custom</span><svg><use href="#chev"/></svg></div></div>
    <div class="f f3"><label>Max:</label><div class="num-in"><span>4</span><div class="spin"><svg><use href="#up"/></svg><svg><use href="#down"/></svg></div></div></div>
  </div>
  <div class="bottom">
    <div class="checks"><label><i></i>Fill holes</label><label><i></i>Keep largest</label></div>
    <button class="primary">Apply</button><button>Cancel</button>
  </div>
</div>
</body>
</html>
```
FILE: styles.css
```css
* { box-sizing: border-box; }
html, body { margin: 0; width: 1920px; height: 1080px; overflow: hidden; }
body { background: #f0f0f0; color: #000; font: 14.5px/20px "Noto Sans", sans-serif; display: flex; flex-direction: column; position: relative; }
p, h1 { margin: 0; }
.sprite { position: absolute; }
.off { opacity: .42; }
.mid { opacity: .6; }

/* title and menus */
.titlebar { height: 34px; background: #f0f2f9; display: flex; align-items: center; padding: 0 29px 0 2px; }
.logo { width: 24px; height: 24px; margin-right: 6px; }
.titlebar h1 { font-size: 17px; font-weight: 400; line-height: 34px; white-space: nowrap; }
.winbtns { margin-left: auto; display: flex; gap: 54px; }
.winbtns svg { width: 16px; height: 16px; fill: none; stroke: #111; stroke-width: 1.300; }
.menubar { height: 28px; background: #fff; display: flex; gap: 23.800px; padding-left: 11px; font-size: 18px; line-height: 29px; white-space: nowrap; }
.menubar span:nth-child(5) { margin-left: -2px; }
.menubar span:nth-child(6) { margin-left: -1px; }
.menubar span:nth-child(12) { margin-left: 4px; }
.menubar span:nth-child(13) { margin-left: 3px; }
.menubar span:nth-child(14) { margin-left: -1px; }
.menubar span:nth-child(15) { margin-left: -2px; }

/* toolbars */
.toolrow { display: flex; align-items: center; padding-left: 2px; flex: none; }
.main-tools { height: 31px; border-bottom: 1px solid #696969; padding-top: 6px; background: linear-gradient(#f0f0f0 2px, #a0a0a0 2px 3px, #fff 3px 5px, #696969 5px 6px, #f8f8f8 6px, #f0f0f0); }
.seg-tools { height: 25px; background: linear-gradient(#f4f4f4, #efefef); padding-bottom: 2px; }
.b { width: 22px; height: 16px; flex: none; }
.main-tools .b { width: 22.5px; }
.main-tools .caret { width: 9px; height: 9px; }
.main-tools i, .seg-tools i { width: 7.500px; height: 22px; flex: none; background: linear-gradient(90deg, transparent 3px, #a0a0a0 3px 4px, #fff 4px 5px, transparent 5px); }
.seg-tools i { width: 8px; }
.framed { outline: 1px solid #888; outline-offset: 1px; background: #fff; }
.main-tools .on { background: #e4eefa; outline: 1px solid #b5b5b5; outline-offset: 2px; width: 18px; margin-left: 2px; margin-right: 3px; }
.boxsel { width: 75px; height: 21px; background: #fff; border: 1px solid #d0d0d0; display: flex; justify-content: space-between; align-items: center; padding: 4px 6px 0 3px; font: 16px/18px "Liberation Mono", monospace; letter-spacing: -.6px; }
.boxsel svg { width: 12px; height: 12px; margin-bottom: 3px; }
.ribbon { align-self: stretch; flex: 1; display: flex; align-items: flex-end; gap: .850px; padding-left: 2px; border-left: 1px solid #696969; background: linear-gradient(#ececec, #adadad); font: 16px/20px "Liberation Mono", monospace; letter-spacing: -.6px; }
.ribbon span { height: 22px; padding: 1px 2px 0 3px; border: 1px solid #696969; border-bottom: 0; border-radius: 5px 5px 0 0; background: linear-gradient(#e8e8e8, #b4b4b4); white-space: nowrap; }
.ribbon .sel { background: #fff; height: 23px; margin-bottom: -1px; padding-top: 2px; }

/* workspace */
.workspace { display: grid; grid-template-columns: 1437px 1fr; height: 937px; flex: none; border-top: 1px solid #a0a0a0; }
.left { display: flex; flex-direction: column; border-top: 1px solid #696969; min-height: 0; }
.views { display: grid; grid-template: 397px 397px / 713px 713px; gap: 3px 2px; padding: 0 0 2px 1px; background: #fff; border-right: 7px solid #f0f0f0; border-left: 1px solid #f0f0f0; flex: none; }
.pane { display: flex; border: 1px solid; border-color: #a0a0a0 #fff #fff #a0a0a0; box-shadow: inset 1px 1px #696969, inset -1px -1px #e3e3e3; padding: 1px; background: #f0f0f0; }
.view { height: 393px; width: 682px; flex: none; background: #000; border: 3px solid #ff8000; shape-rendering: crispEdges; font: bold 16.5px "Liberation Sans", sans-serif; }
.view .num { font-size: 18px; }
.view.axial { border-color: red; width: 683px; }
.view.sagittal { border-color: #80ff80; }
.view.scene { border-color: #c0ffc0; background: #1f3263; width: 686px; shape-rendering: auto; }
.m1 { fill: #488c48; } .m2 { fill: #70b070; } .m3 { fill: #96d896; } .m4 { fill: #baffba; }
.vscroll { flex: 1; padding: 179px 8px 0; }
.vscroll b { display: block; width: 11px; height: 34px; background: #868686; }
.tools3d { flex: 1; display: flex; flex-direction: column; padding-top: 2px; }
.tools3d .b { height: 22px; padding: 3px 0; }
.tools3d i { height: 5.900px; margin: 0 3px 0 2px; background: linear-gradient(transparent 2px, #a0a0a0 2px 3px, #fff 3px 4px, transparent 4px); }
.tools3d .lit { background: #cce8ff; border-radius: 3px; outline: 1px solid #99d1ff; outline-offset: -1px; }
.log { height: 134px; border-top: 1px solid #a0a0a0; border-left: 1px solid #a0a0a0; margin-right: 9px; background: #fff; display: flex; overflow: hidden; font: 16px/21px "Liberation Mono", monospace; letter-spacing: -.6px; }
.lines { width: 1404px; padding: 0 0 0 6px; margin-top: -10px; flex: none; white-space: nowrap; }
.lines .in { padding-left: 71px; }
.lines b { letter-spacing: .4px; }
.log .vscroll { padding: 44px 7px 0; background: #f0f0f0; }
.log .vscroll b { height: 61px; }

/* side panel */
.side { display: flex; border: 1px solid #828790; border-width: 2px 1px 1px 1px; margin-right: 2px; height: 934px; overflow: hidden; }
.sections { width: 453px; flex: none; }
.sec { border-top: 1px solid #8a8d96; height: 200px; position: relative; display: flex; flex-direction: column; }
.sec::after { content: ""; height: 2px; margin: auto 0 2px 1px; background: repeating-linear-gradient(90deg, #8c8c8c 0 2px, transparent 2px 4px); }
.s3 { height: 199px; } .s4 { height: 251px; } .s5 { height: 100px; }
.tabs { display: flex; gap: 1px; align-items: flex-end; height: 27px; flex: none; font: 16px/22px "Liberation Mono", monospace; letter-spacing: -.6px; white-space: nowrap; }
.tabs span { height: 26px; padding: 3px 9px 0; border: 1px solid #828790; background: linear-gradient(#efefef, #d2d2d2); }
.tabs .sel { height: 27px; background: #fff; border-width: 0 1px 0 0; padding: 3px 8px 0 10px; margin-right: 1px; }
.s4 .tabs .sel { padding-top: 4px; }
.tabs .cut { width: 154px; overflow: hidden; border-right: 0; }
.pager { position: absolute; right: 0; top: 0; display: flex; height: 27px; }
.pager svg { width: 15px; height: 27px; overflow: visible; }
.pager .fwd { width: 24px; background: #e5f3ff; }
.list { margin: 3px 0 0 2px; width: 445px; height: 124px; flex: none; border: 1px solid #828790; background: #fff; padding: 1px; }
.s2 .list { height: 126px; }
.row { display: grid; line-height: 26px; height: 25px; font-size: 15px; }
.head span { border-right: 1px solid #e0e0e0; padding-left: 6px; }
.head span:first-child { padding-left: 5px; }
.row span { overflow: hidden; white-space: nowrap; }
.row .r { text-align: right; padding-right: 6px; }
.c1 { grid-template-columns: 55px 40px 40px 50px 50px; }
.c2 { grid-template-columns: 60px 35px 45px 35px 60px 45px 45px; }
.c3 { grid-template-columns: 80px 45px 45px 45px 60px; }
.c3 span { padding-left: 9px; } .c3 span:first-child { padding-left: 5px; } .c3 span:last-child { padding-left: 6px; }
.item { width: 235px; height: 20px; line-height: 19px; background: #f0f0f0; }
.item svg { width: 16px; height: 16px; vertical-align: -2px; margin: 0 2px 0 3px; }
.item span + span svg { margin-left: 9px; vertical-align: 0; }
.item .r { padding-right: 3px; }
.acts { display: flex; justify-content: flex-end; gap: 14.200px; padding: 10px 10px 0 0; }
.s2 .acts { padding-top: 8px; }
.s3 .acts { padding-top: 9px; }
.acts svg { width: 16px; height: 16px; }
.hist { width: 450px; height: 166px; margin: 3px 0 0 2px; flex: none; shape-rendering: crispEdges; }
.hist, .dhist { font: bold 10px "Liberation Sans", sans-serif; }
.gray { display: flex; align-items: center; padding: 10px 0 0 38px; height: 40px; }
.gray label { width: 83px; padding-top: 5px; }
.combo { border: 1px solid #8a8a8a; border-radius: 2px; background: #fff; display: flex; align-items: center; justify-content: space-between; padding: 0 7px 0 3px; height: 27px; white-space: nowrap; }
.combo svg { width: 13px; height: 13px; flex: none; }
.combo span { padding-bottom: 2px; }
.gray .combo { width: 108px; }
.gray .combo span { width: 76px; overflow: hidden; padding-bottom: 0; }
.gray .mn { width: 42px; padding-left: 7px; } .gray .mx { width: 49px; padding-left: 8px; }
.inp { width: 63px; height: 28px; background: #fff; border-bottom: 1px solid #888; padding: 3px 3px; font-size: 15px; }
.s5 .tabs { height: 25px; } .s5 .tabs .sel { height: 25px; padding-top: 3px; }
.tree { width: 449px; font-size: 18px; }
.tree p { line-height: 30px; padding-left: 5px; padding-top: 3px; height: 30px; white-space: nowrap; }
.tree .child { padding-left: 32px; font-size: 18px; letter-spacing: .2px; }
.sidebar-scroll { padding: 26px 0 0 8px; }
.sidebar-scroll b { display: block; width: 11px; height: 718px; background: #868686; }

.status { height: 25px; flex: none; display: flex; align-items: stretch; padding-left: 2px; font-size: 18.500px; line-height: 24px; border-top: 1px solid #d4d4d4; }
.status span { width: 1551px; }
.status i { width: 208px; border-left: 1px solid #d0d0d0; margin-top: 2px; }
.status .second { width: 3px; border: 0; border-right: 1px solid #d0d0d0; }
.status .grip { flex: 1; border: 1px solid #bcbcbc; background: #e6e6e6; }

/* dialog */
.dialog { position: absolute; left: 551px; top: 310px; width: 568px; height: 367px; background: #f0f0f0; border-radius: 5px; box-shadow: 0 0 0 1.5px rgba(85, 85, 85, .75); overflow: hidden; display: flex; flex-direction: column; }
.dtitle { height: 43px; background: #eff3f9; display: flex; justify-content: space-between; padding: 9px 1px 0 12px; font-size: 16.700px; line-height: 23px; }
.dtitle button { width: 30px; height: 30px; background: #c75050; border: 0; padding: 1px 0 0; }
.dtitle svg { width: 10px; height: 10px; }
.dhist { width: 535px; height: 180px; margin: 15px 0 0 21px; flex: none; shape-rendering: crispEdges; }
.fields { display: grid; grid-template-columns: 117px 296px 105px; padding-left: 25px; margin-top: 14px; font-size: 15px; }
.f label { display: block; padding-left: 4px; height: 24px; line-height: 19px; letter-spacing: -.05px; }
.f3 label { padding-left: 2px; }
.f2 .combo { width: 284px; }
.num-in { display: flex; height: 31px; width: 101px; background: #fff; border-bottom: 1px solid #888; padding-left: 4px; line-height: 25px; }
.f3 .num-in { width: 105px; padding-left: 3px; }
.act { border-bottom: 2px solid #0067c0; }
.spin { margin-left: auto; width: 27px; border: 1px solid #a8a8a8; background: #e4e4e4; padding: 1px; display: flex; flex-direction: column; gap: 1px; height: 31px; }
.spin svg { flex: 1; min-height: 0; width: 23px; border: 1px solid #aaa; background: #f0f0f0; padding: 0 5px 1px; }
.bottom { display: flex; padding-left: 25px; margin-top: 7px; font-size: 15px; }
.checks { width: 294px; display: flex; flex-direction: column; gap: 6px; }
.checks label { display: flex; gap: 3px; height: 20px; line-height: 19px; letter-spacing: -.05px; }
.checks i { width: 20px; height: 20px; border: 1px solid #666; border-radius: 4px; background: #f5f5f5; }
.bottom button { width: 111px; height: 31px; margin: 15px 8px 0 0; border: 1px solid #d0d0d0; border-radius: 4px; background: #fdfdfd; font: inherit; color: #000; padding: 0; }
.bottom .primary { border-color: #0067c0; }
```
